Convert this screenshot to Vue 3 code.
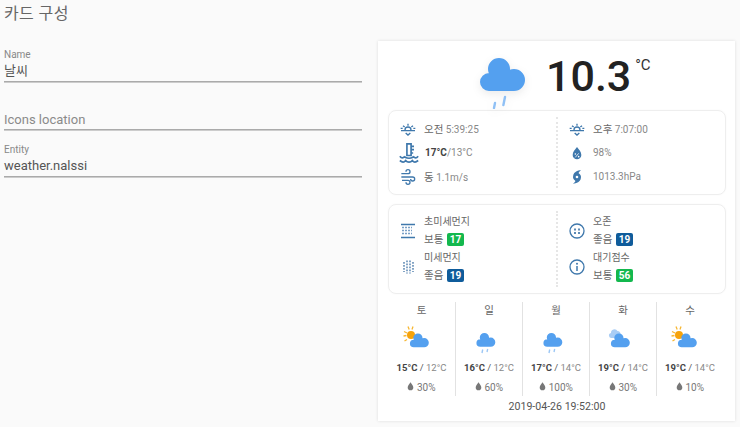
<script setup>
const forecast = [
  { d: '토', icon: 'sun', hi: '15°C', lo: '12°C', p: '30%' },
  { d: '일', icon: 'rain', hi: '16°C', lo: '12°C', p: '60%' },
  { d: '월', icon: 'rain', hi: '17°C', lo: '14°C', p: '100%' },
  { d: '화', icon: 'snow', hi: '19°C', lo: '14°C', p: '30%' },
  { d: '수', icon: 'sun', hi: '19°C', lo: '14°C', p: '10%' },
]
const cloud = 'M9 12a11 11 0 1 0 22 0a11 11 0 1 0-22 0zM24 23a11 11 0 1 0 22 0a11 11 0 1 0-22 0zM1 25a9 9 0 1 0 18 0a9 9 0 1 0-18 0zM10 20V34H35V20z'
const sunrise = 'M7.500 13.500a4.500 4.500 0 0 1 9 0M1.500 14.500h21M12 4v3M4.500 7l2.500 2M19.500 7l-2.500 2M1 11h3M20 11h3M8.500 18l3.500 3 3.500-3'
</script>

<template>
  <div class="page">
    <section class="editor">
      <h2 class="title">카드 구성</h2>
      <div class="field first"><label>Name</label><div class="value">날씨</div></div>
      <div class="field empty"><div class="ph">Icons location</div></div>
      <div class="field third"><label>Entity</label><div class="value">weather.nalssi</div></div>
    </section>

    <section class="card">
      <div class="now">
        <svg class="big-icon" viewBox="0 0 46 52" width="46" height="52">
          <path :d="cloud" fill="#54a0ef"/>
          <path d="M16 46l-1 5M26 40l-1.600 8" stroke="#8fc0f5" stroke-width="2.400" stroke-linecap="round"/>
        </svg>
        <div class="temp">10.3</div>
        <div class="unit">°C</div>
      </div>

      <div class="panel p1">
        <div class="half">
          <div class="row">
            <svg class="ico" viewBox="0 0 24 24"><path :d="sunrise" fill="none" stroke="#3f78ac" stroke-width="2"/></svg>
            <span class="t"><span class="k">오전</span> 5:39:25</span>
          </div>
          <div class="row">
            <svg class="ico thermo" viewBox="0 0 24 24"><path d="M9.500 1h5v14h-5zM14 4h4M14 8h4M14 12h3M1 16c2 2.500 4 2.500 6 0M7 16c0 3 10 3 10 0M17 16c2 2.500 4 2.500 6 0M1 21c3 2.500 5 2.500 7 0 2 2.500 6 2.500 8 0 2 2.500 4 2.500 7 0" fill="none" stroke="#3f78ac" stroke-width="2"/></svg>
            <span class="t"><b>17°C</b>/13°C</span>
          </div>
          <div class="row">
            <svg class="ico" viewBox="0 0 24 24"><path d="M2 7h10a3 3 0 1 0-3-3M2 12h17a3 3 0 1 1-3 3M3 17h9a3 3 0 1 1-3 3" fill="none" stroke="#3f78ac" stroke-width="2"/></svg>
            <span class="t"><span class="k">동</span> 1.1m/s</span>
          </div>
        </div>
        <div class="half second">
          <div class="row">
            <svg class="ico" viewBox="0 0 24 24"><path :d="sunrise" fill="none" stroke="#3f78ac" stroke-width="2"/></svg>
            <span class="t"><span class="k">오후</span> 7:07:00</span>
          </div>
          <div class="row">
            <svg class="ico" viewBox="0 0 24 24"><path d="M12 3c3 4 6.500 7 6.500 12a6.500 6.500 0 0 1-13 0C5.500 10 9 7 12 3z" fill="#3f78ac"/><path d="M9.500 18.500l5-6" stroke="#fff" stroke-width="1.200"/><circle cx="9.500" cy="13.500" r="1.200" fill="#fff"/><circle cx="14.500" cy="17.500" r="1.200" fill="#fff"/></svg>
            <span class="t">98%</span>
          </div>
          <div class="row">
            <svg class="ico" viewBox="0 0 24 24"><path fill="#3f78ac" d="M15,6.790C16.860,7.860 18,9.850 18,12C18,22 6,22 6,22C7.250,21.060 8.380,19.950 9.340,18.710C9.380,18.660 9.410,18.610 9.440,18.550C9.690,18.060 9.500,17.460 9,17.210C7.140,16.140 6,14.150 6,12C6,2 18,2 18,2C16.750,2.940 15.620,4.050 14.660,5.290C14.620,5.340 14.590,5.390 14.560,5.450C14.310,5.940 14.500,6.540 15,6.790M12,14A2,2 0 0,0 14,12A2,2 0 0,0 12,10A2,2 0 0,0 10,12A2,2 0 0,0 12,14Z"/></svg>
            <span class="t">1013.3hPa</span>
          </div>
        </div>
      </div>

      <div class="panel p2">
        <div class="half">
          <div class="air">
            <svg class="ico air-ico" viewBox="0 0 16 16"><path d="M1 1.500h14M1 14.500h14" stroke="#3f78ac" stroke-width="1.400"/><path d="M2 4.500h10M2 7.500h10M2 10.500h10" stroke="#7aa0c6" stroke-width="1.500" stroke-dasharray="2 1"/></svg>
            <div class="lines"><div class="k lab">초미세먼지</div><div class="k">보통 <span class="badge green">17</span></div></div>
          </div>
          <div class="air">
            <svg class="ico air-ico" viewBox="0 0 16 16"><path d="M4 3v10M7 1.500v13M10 1.500v13M13 3v10" stroke="#6d94bb" stroke-width="1.700" stroke-dasharray="1.800 1.200"/></svg>
            <div class="lines"><div class="k lab">미세먼지</div><div class="k">좋음 <span class="badge blue">19</span></div></div>
          </div>
        </div>
        <div class="half second">
          <div class="air">
            <svg class="ico air-ico" viewBox="0 0 16 16"><circle cx="8" cy="8" r="7" fill="none" stroke="#3f78ac" stroke-width="1.300"/><path d="M5 5.500h2v2H5zM9 5.500h2v2H9zM5 9h2v2H5zM9 9h2v2H9z" fill="#5d8ab5"/></svg>
            <div class="lines"><div class="k lab">오존</div><div class="k">좋음 <span class="badge blue">19</span></div></div>
          </div>
          <div class="air">
            <svg class="ico air-ico" viewBox="0 0 16 16"><circle cx="8" cy="8" r="7" fill="none" stroke="#3f78ac" stroke-width="1.300"/><path d="M8 7v5" stroke="#3f78ac" stroke-width="1.500"/><circle cx="8" cy="4.800" r="1" fill="#3f78ac"/></svg>
            <div class="lines"><div class="k lab">대기점수</div><div class="k">보통 <span class="badge green">56</span></div></div>
          </div>
        </div>
      </div>

      <div class="forecast">
        <div v-for="f in forecast" :key="f.d + f.p" class="day">
          <div class="dname">{{ f.d }}</div>
          <svg class="dicon" viewBox="-3 0 36 28" width="36" height="28">
            <g v-if="f.icon === 'sun'">
              <path d="M1 -.500l1.200 3M6 -.500l-1 3M-3 4.500l3 1.500M-3.500 9l3-.500M-2.500 14l2.500-1.500" stroke="#f7b733" stroke-width="1.300"/>
              <circle cx="4" cy="8" r="4" fill="#f6a30c"/>
            </g>
            <path v-if="f.icon === 'snow'" d="M4 11a2.500 2.500 0 0 1-1-5 3.500 3.500 0 0 1 6.500-2 3 3 0 0 1 3 3.500L9 11z" fill="#a9cdf5"/>
            <g :transform="f.icon === 'rain' ? 'translate(2 5.500) scale(.42)' : 'translate(2.500 6) scale(.42)'">
              <path :d="cloud" fill="#54a0ef"/>
            </g>
            <path v-if="f.icon === 'rain'" d="M8.700 22.500l-.700 3.500M13.700 22l-.700 3" stroke="#9cc7f5" stroke-width="1.400"/>
          </svg>
          <div class="range"><b>{{ f.hi }}</b> / <span class="lo">{{ f.lo }}</span></div>
          <div class="prob">
            <svg viewBox="0 0 10 12" width="7" height="9"><path d="M5 0c2 3 4 5 4 7.500a4 4 0 0 1-8 0C1 5 3 3 5 0z" fill="#777"/></svg>
            {{ f.p }}
          </div>
        </div>
      </div>
      <div class="stamp">2019-04-26 19:52:00</div>
    </section>
  </div>
</template>

<style scoped>
.page { width: 740px; height: 427px; overflow: hidden; background: #fafafa; display: flex; font-family: Roboto, "Noto Sans CJK KR", sans-serif; box-sizing: border-box; }
.editor { width: 358px; margin-left: 4px; flex: none; }
.title { margin: 3px 0 0; font-size: 16px; line-height: 22px; font-weight: 400; color: #666; letter-spacing: .4px; }
.field { border-bottom: 1px solid #aaa; box-shadow: 0 1px 0 #ccc; }
.field label { display: block; font-size: 10px; line-height: 12px; color: #888; }
.first { height: 32px; margin-top: 24px; }
.value { font-size: 13px; line-height: 20px; color: #555; }
.empty { height: 21px; margin-top: 26px; }
.ph { font-size: 13px; line-height: 20px; color: #8a8a8a; padding-top: 2px; }
.third { height: 32px; margin-top: 14px; }
.card { width: 357px; height: 380px; margin: 41px 0 0 16px; background: #fff; box-shadow: 0 0 3px rgba(0,0,0,.12); box-sizing: border-box; padding: 0 9px 0 10px; display: flex; flex-direction: column; flex: none; }
.now { height: 69px; display: flex; padding-left: 91px; align-items: flex-start; }
.big-icon { margin-top: 16px; filter: drop-shadow(0 3px 4px rgba(0,0,0,.08)); }
.temp { margin-left: 21px; margin-top: 7px; font-size: 43px; line-height: 56px; color: #222; font-weight: 500; }
.unit { margin-left: 4px; margin-top: 15px; font-size: 15px; line-height: 18px; color: #333; }
.panel { height: 85px; border: 1px solid #eee; border-radius: 8px; display: flex; box-sizing: border-box; box-shadow: 0 0 2px rgba(0,0,0,.04); }
.p2 { height: 90px; margin-top: 9px; }
.half { width: 168px; flex: none; padding: 6px 0 0 11px; box-sizing: border-box; }
.half.second { padding: 0 0 0 11px; border-left: 2px dotted #e6e6e6; margin: 6px 0; margin-left: -1px; }
.row { height: 23px; display: flex; align-items: center; font-size: 10px; color: #888; }
.row + .row { padding-top: 1px; }
.ico { width: 16px; height: 16px; flex: none; margin-right: 8px; }
.thermo { width: 20px; height: 20px; margin: 0 6px 0 -1px; }
.t b { color: #444; font-weight: 700; }
.k { font-size: 10.500px; color: #666; }
.air { height: 36px; display: flex; align-items: center; }
.p2 .half { padding-top: 8px; }
.p2 .half.second { padding-top: 2px; }
.lines { display: flex; flex-direction: column; }
.lines .k { line-height: 18px; }
.lines .lab { font-size: 10px; }
.badge { display: inline-block; min-width: 13px; padding: 0 2px; margin-left: 1px; border-radius: 2px; color: #fff; font-size: 10px; font-weight: 700; line-height: 13px; text-align: center; }
.green { background: #13b84e; }
.blue { background: #0f5c9b; }
.forecast { display: grid; grid-template-columns: repeat(5, 67px); margin-top: 8px; height: 94px; }
.day { text-align: center; border-left: 1px solid #e2e2e2; display: flex; flex-direction: column; align-items: center; box-sizing: border-box; }
.day:first-child { border-left: 0; }
.dname { font-size: 10.500px; line-height: 14px; color: #666; margin-top: 2px; }
.dicon { margin-top: 9px; overflow: visible; }
.range { font-size: 9.500px; line-height: 14px; color: #555; margin-top: 6px; }
.range b { color: #444; }
.lo { color: #888; }
.prob { font-size: 10px; line-height: 14px; color: #777; margin-top: 6px; }
.stamp { text-align: center; font-size: 10.600px; line-height: 14px; color: #555; margin-top: 4px; }
</style>
